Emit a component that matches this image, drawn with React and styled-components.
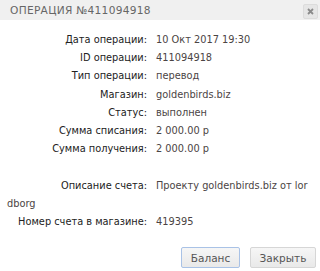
import React from 'react';
import styled, { createGlobalStyle } from 'styled-components';

const Global = createGlobalStyle`
	html, body {
		margin: 0;
		padding: 0;
		background: #fff;
	}
`;

const Dialog = styled.div`
	width: 320px;
	height: 271px;
	background: #fff;
	font-family: 'DejaVu Sans', sans-serif;
	overflow: hidden;
`;

const Header = styled.div`
	height: 20px;
	background: #f0f0f0;
	display: flex;
	align-items: center;
	justify-content: space-between;
	padding: 0 2px 0 10px;
`;

const Title = styled.div`
	font-size: 10.6px;
	letter-spacing: 0.3px;
	color: #666;
	text-transform: uppercase;
`;

const CloseBox = styled.div`
	width: 13px;
	height: 13px;
	margin-top: 3px;
	background: #e6e6e6;
	border: 1px solid #dcdcdc;
	border-radius: 2px;
	display: flex;
	align-items: center;
	justify-content: center;
`;

const Body = styled.div`
	padding: 11px 9px 0 7px;
	font-size: 9.8px;
	line-height: 18.2px;
`;

const Row = styled.div`
	min-height: 18.2px;
	word-break: break-all;
`;

const Label = styled.span`
	display: inline-block;
	width: 140px;
	text-align: right;
	margin-right: 9px;
	color: #222;
	word-break: normal;
`;

const Value = styled.span`
	color: #4b4444;
`;

const Buttons = styled.div`
	display: flex;
	justify-content: flex-end;
	gap: 10px;
	padding: 16px 4px 0 0;
`;

const Button = styled.button`
	width: ${(p) => p.$w}px;
	height: 21px;
	padding: 0;
	font-family: 'DejaVu Sans', sans-serif;
	font-size: 10.5px;
	color: #555;
	background: linear-gradient(#f6f6f6, #e9e9e9);
	border: 1px solid ${(p) => (p.$focus ? '#a9c2e6' : '#d6d6d6')};
	border-radius: 2px;
`;

const rows = [
	['Дата операции:', '10 Окт 2017 19:30'],
	['ID операции:', '411094918'],
	['Тип операции:', 'перевод'],
	['Магазин:', 'goldenbirds.biz'],
	['Статус:', 'выполнен'],
	['Сумма списания:', '2 000.00 р'],
	['Сумма получения:', '2 000.00 р'],
	null,
	['Описание счета:', 'Проекту goldenbirds.biz от lordborg'],
	['Номер счета в магазине:', '419395'],
];

export default function App() {
	return (
		<Dialog>
			<Global />
			<Header>
				<Title>Операция №411094918</Title>
				<CloseBox>
					<svg width="7" height="7" viewBox="0 0 7 7">
						<path d="M1 1L6 6M6 1L1 6" stroke="#8a8a8a" strokeWidth="1.8" />
					</svg>
				</CloseBox>
			</Header>
			<Body>
				{rows.map((r, i) =>
					r ? (
						<Row key={i}>
							<Label>{r[0]}</Label>
							<Value>{r[1]}</Value>
						</Row>
					) : (
						<Row key={i} />
					)
				)}
			</Body>
			<Buttons>
				<Button $focus $w={59}>Баланс</Button>
				<Button $w={66}>Закрыть</Button>
			</Buttons>
		</Dialog>
	);
}
